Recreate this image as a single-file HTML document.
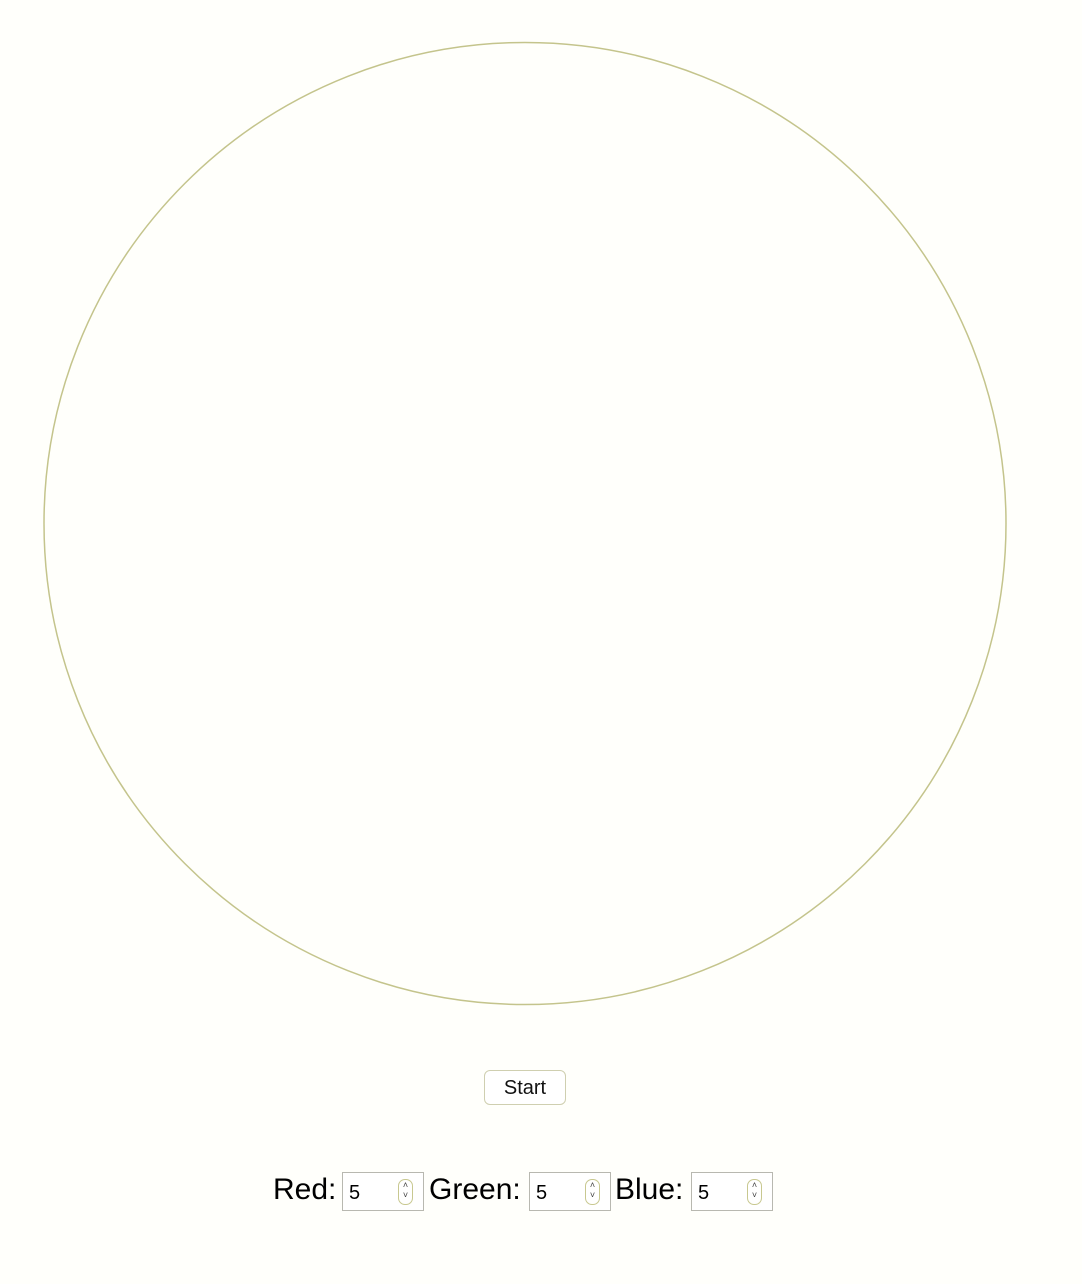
<!DOCTYPE html>
<html><head><meta charset="utf-8"><style>
html,body{margin:0;padding:0;background:#fffffb;width:1082px;height:1284px;overflow:hidden;font-family:"Liberation Sans",sans-serif;}
.a{position:absolute;}
.lbl{font-size:30px;color:#000;top:1172px;line-height:36px;}
.inp{top:1172px;width:80px;height:37px;border:1px solid #b8b8b0;background:#fff;}
.inp span{position:absolute;left:6px;top:9px;font-size:20px;}
.sp{position:absolute;right:10px;top:6px;width:13px;height:24px;border:1px solid #c8c890;border-radius:7px;font-size:9px;line-height:10px;text-align:center;color:#444;}
</style></head><body>
<svg class="a" style="left:0;top:0" width="1082" height="1060">
<circle cx="525" cy="523.5" r="481" fill="none" stroke="#c4c48c" stroke-width="1.5"/>
</svg>
<div class="a" style="left:484px;top:1070px;width:80px;height:33px;border:1px solid #cfcfb0;border-radius:6px;background:#fff;font-size:20px;text-align:center;line-height:34px;color:#111;">Start</div>
<div class="a lbl" style="left:273px">Red:</div>
<div class="a inp" style="left:342px"><span>5</span><div class="sp">˄<br>˅</div></div>
<div class="a lbl" style="left:429px">Green:</div>
<div class="a inp" style="left:529px"><span>5</span><div class="sp">˄<br>˅</div></div>
<div class="a lbl" style="left:615px">Blue:</div>
<div class="a inp" style="left:691px"><span>5</span><div class="sp">˄<br>˅</div></div>
</body></html>
